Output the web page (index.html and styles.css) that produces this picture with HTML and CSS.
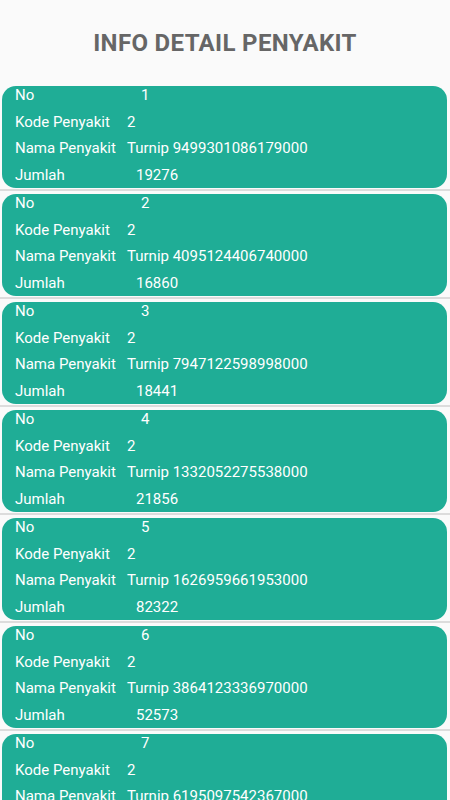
FILE: index.html
```html
<!DOCTYPE html>
<html lang="id">
<head>
<meta charset="utf-8">
<title>Info Detail Penyakit</title>
<link rel="stylesheet" href="styles.css">
</head>
<body>
<header class="header"><h1 class="title">INFO DETAIL PENYAKIT</h1></header>
<main class="list">
  <section class="item"><div class="card">
    <span class="lbl">No</span><span class="val v-no">1</span>
    <span class="lbl">Kode Penyakit</span><span class="val">2</span>
    <span class="lbl">Nama Penyakit</span><span class="val">Turnip 9499301086179000</span>
    <span class="lbl">Jumlah</span><span class="val v-jml">19276</span>
  </div><div class="divider"></div></section>
  <section class="item"><div class="card">
    <span class="lbl">No</span><span class="val v-no">2</span>
    <span class="lbl">Kode Penyakit</span><span class="val">2</span>
    <span class="lbl">Nama Penyakit</span><span class="val">Turnip 4095124406740000</span>
    <span class="lbl">Jumlah</span><span class="val v-jml">16860</span>
  </div><div class="divider"></div></section>
  <section class="item"><div class="card">
    <span class="lbl">No</span><span class="val v-no">3</span>
    <span class="lbl">Kode Penyakit</span><span class="val">2</span>
    <span class="lbl">Nama Penyakit</span><span class="val">Turnip 7947122598998000</span>
    <span class="lbl">Jumlah</span><span class="val v-jml">18441</span>
  </div><div class="divider"></div></section>
  <section class="item"><div class="card">
    <span class="lbl">No</span><span class="val v-no">4</span>
    <span class="lbl">Kode Penyakit</span><span class="val">2</span>
    <span class="lbl">Nama Penyakit</span><span class="val">Turnip 1332052275538000</span>
    <span class="lbl">Jumlah</span><span class="val v-jml">21856</span>
  </div><div class="divider"></div></section>
  <section class="item"><div class="card">
    <span class="lbl">No</span><span class="val v-no">5</span>
    <span class="lbl">Kode Penyakit</span><span class="val">2</span>
    <span class="lbl">Nama Penyakit</span><span class="val">Turnip 1626959661953000</span>
    <span class="lbl">Jumlah</span><span class="val v-jml">82322</span>
  </div><div class="divider"></div></section>
  <section class="item"><div class="card">
    <span class="lbl">No</span><span class="val v-no">6</span>
    <span class="lbl">Kode Penyakit</span><span class="val">2</span>
    <span class="lbl">Nama Penyakit</span><span class="val">Turnip 3864123336970000</span>
    <span class="lbl">Jumlah</span><span class="val v-jml">52573</span>
  </div><div class="divider"></div></section>
  <section class="item"><div class="card">
    <span class="lbl">No</span><span class="val v-no">7</span>
    <span class="lbl">Kode Penyakit</span><span class="val">2</span>
    <span class="lbl">Nama Penyakit</span><span class="val">Turnip 6195097542367000</span>
    <span class="lbl">Jumlah</span><span class="val v-jml">34410</span>
  </div><div class="divider"></div></section>
</main>
</body>
</html>
```
FILE: styles.css
```css
html, body {
  margin: 0;
  padding: 0;
}
body {
  background: #fafafa;
  font-family: Roboto, "Liberation Sans", sans-serif;
  overflow: hidden;
  height: 800px;
}
.header {
  height: 86px;
  box-sizing: border-box;
  padding-top: 29px;
}
.title {
  margin: 0;
  text-align: center;
  font-size: 24px;
  line-height: 28px;
  letter-spacing: 0.35px;
  font-weight: 700;
  color: #666666;
}
.item {
  height: 108px;
}
.card {
  margin: 0 3px 0 2px;
  height: 102px;
  box-sizing: border-box;
  padding: 0 0 0 13px;
  background: #1fad96;
  border-radius: 14px;
  display: grid;
  grid-template-columns: 112px 1fr;
  grid-auto-rows: 18px;
  row-gap: 8.67px;
  color: #ffffff;
  font-size: 15px;
  line-height: 18px;
  white-space: nowrap;
}
.val.v-no {
  padding-left: 14px;
}
.val.v-jml {
  padding-left: 9px;
}
.divider {
  margin-top: 1px;
  height: 1.5px;
  background: #dcdcdc;
}
```
